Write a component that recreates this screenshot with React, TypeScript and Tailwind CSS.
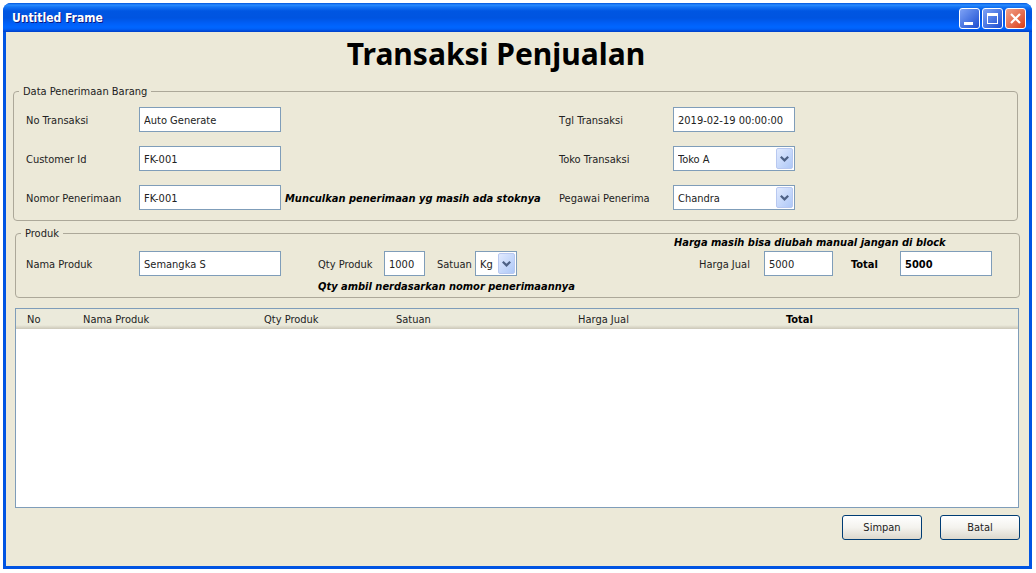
import type { ReactNode } from 'react';

const fieldBox =
  'h-[25px] w-full min-w-0 rounded-none border border-[#7f9db9] bg-white px-1 pt-0.5 text-[11px] leading-4 text-[#222] outline-none';

function Field({ id, value, bold = false }: { id: string; value: string; bold?: boolean }) {
  return (
    <input id={id} type="text" defaultValue={value} className={`${fieldBox} ${bold ? 'font-bold text-black' : ''}`} />
  );
}

function Dropdown({ id, value }: { id: string; value: string }) {
  return (
    <div className="relative">
      <select id={id} defaultValue={value} className={`${fieldBox} block appearance-none`}>
        <option>{value}</option>
      </select>
      <span className="pointer-events-none absolute top-0.5 right-0.5 flex h-[21px] w-[17px] items-center justify-center rounded-xs border border-[#b8c8f0] bg-linear-to-br from-[#e1eafe] to-[#aec8f7]">
        <svg width="9" height="6" viewBox="0 0 9 6" fill="none" aria-hidden="true">
          <path d="M0.8 0.8 4.5 4.4 8.2 0.8" stroke="#4d6185" strokeWidth="2.2" />
        </svg>
      </span>
    </div>
  );
}

function Group({ title, className, children }: { title: string; className: string; children: ReactNode }) {
  return (
    <fieldset className={`min-w-0 rounded border border-[#aca899] pl-[5px] ${className}`}>
      <legend className="h-[3px] px-1 leading-[3px]">{title}</legend>
      {children}
    </fieldset>
  );
}

const captionButton = 'flex size-[21px] items-center justify-center rounded-[3px] border border-white';

export default function App() {
  return (
    <div className="min-h-screen bg-white pt-[3px] pr-1 pb-1 pl-[3px] font-['DejaVu_Sans_Condensed','DejaVu_Sans',sans-serif] text-[11px] leading-4 text-[#222]">
      <main className="flex min-h-[calc(100vh-7px)] flex-col overflow-hidden rounded-t-lg bg-[#0054e3]">
        <header className="flex h-[29px] shrink-0 items-center justify-between bg-[linear-gradient(180deg,#0054dc_0px,#2a8cff_2px,#1474f4_4px,#0056e2_8px,#0054e0_15px,#005ef6_20px,#0066ff_24px,#0060f8_26px,#003fc8_29px)] pr-1.5 pl-[9px]">
          <h1 className="text-xs font-bold text-white [text-shadow:1px_1px_#0a1883]">Untitled Frame</h1>
          <div className="flex gap-0.5 pt-0.5">
            <button type="button" aria-label="Minimize" className={`${captionButton} bg-linear-to-br from-[#7fa2f5] to-[#1c4bd0]`}>
              <svg width="19" height="19" viewBox="0 0 19 19" aria-hidden="true">
                <path d="M4 13h9v3H4z" fill="#fff" />
              </svg>
            </button>
            <button type="button" aria-label="Maximize" className={`${captionButton} bg-linear-to-br from-[#7fa2f5] to-[#1c4bd0]`}>
              <svg width="19" height="19" viewBox="0 0 19 19" aria-hidden="true">
                <path d="M4 4h11v11H4zM5 7v7h9V7z" fill="#fff" fillRule="evenodd" />
              </svg>
            </button>
            <button type="button" aria-label="Close" className={`${captionButton} bg-linear-to-br from-[#f0a088] to-[#d8380c]`}>
              <svg width="19" height="19" viewBox="0 0 19 19" aria-hidden="true">
                <path d="M5 5l9 9M14 5l-9 9" stroke="#fff" strokeWidth="2.2" />
              </svg>
            </button>
          </div>
        </header>

        <div className="mx-[3px] mb-[3px] flex flex-1 flex-col bg-[#ece9d8] pr-2.5 pb-[26px] pl-[9px]">
          <h2 className="pt-1 pr-[42px] text-center font-['Noto_Sans',sans-serif] text-[30px] leading-9 font-bold text-black">
            Transaksi Penjualan
          </h2>

          <Group title="Data Penerimaan Barang" className="mt-[18px] mr-px -ml-0.5 pt-3.5 pb-2.5">
            <div className="grid grid-cols-[113px_142px_minmax(0,1fr)_114px_122px_222px] items-center gap-y-3.5 pl-[7px] [&_label]:pt-0.5">
              <label htmlFor="no">No Transaksi</label>
              <Field id="no" value="Auto Generate" />
              <span />
              <label htmlFor="tgl">Tgl Transaksi</label>
              <Field id="tgl" value="2019-02-19 00:00:00" />
              <span />

              <label htmlFor="customer">Customer Id</label>
              <Field id="customer" value="FK-001" />
              <span />
              <label htmlFor="toko">Toko Transaksi</label>
              <Dropdown id="toko" value="Toko A" />
              <span />

              <label htmlFor="nomor">Nomor Penerimaan</label>
              <Field id="nomor" value="FK-001" />
              <em className="pt-0.5 pl-1 font-bold whitespace-nowrap text-black">
                Munculkan penerimaan yg masih ada stoknya
              </em>
              <label htmlFor="pegawai">Pegawai Penerima</label>
              <Dropdown id="pegawai" value="Chandra" />
            </div>
          </Group>

          <Group title="Produk" className="mt-[11px] -mr-px pb-0.5">
            <div className="grid grid-cols-[113px_142px_37px_minmax(0,1fr)_318px] grid-rows-[16px_25px_19px] items-center pr-[27px] pl-[5px] [&_label]:pt-0.5">
              <em className="col-start-5 font-bold whitespace-nowrap text-black">
                Harga masih bisa diubah manual jangan di block
              </em>
              <label htmlFor="nama" className="col-start-1">
                Nama Produk
              </label>
              <Field id="nama" value="Semangka S" />
              <div className="col-start-4 grid grid-cols-[66px_53px_38px_42px] items-center">
                <label htmlFor="qty">Qty Produk</label>
                <div className="pr-3">
                  <Field id="qty" value="1000" />
                </div>
                <label htmlFor="satuan">Satuan</label>
                <Dropdown id="satuan" value="Kg" />
              </div>
              <div className="col-start-5 grid grid-cols-[65px_87px_49px_92px] items-center pl-[25px]">
                <label htmlFor="harga">Harga Jual</label>
                <div className="pr-[18px]">
                  <Field id="harga" value="5000" />
                </div>
                <label htmlFor="total" className="font-bold text-black">
                  Total
                </label>
                <Field id="total" value="5000" bold />
              </div>
              <em className="col-start-4 pt-0.5 font-bold whitespace-nowrap text-black">
                Qty ambil nerdasarkan nomor penerimaannya
              </em>
            </div>
          </Group>

          <div className="mt-2.5 flex-1 border border-[#7f9db9] bg-white">
            <table className="w-full table-fixed border-collapse">
              <thead>
                <tr className="h-5 bg-[linear-gradient(180deg,#ebeadb_0px,#ebeadb_16px,#cbc7b8_20px)] text-left *:pt-px *:pl-[11px] *:font-normal">
                  <th className="w-14">No</th>
                  <th className="w-[181px]">Nama Produk</th>
                  <th className="w-[132px]">Qty Produk</th>
                  <th className="w-[182px]">Satuan</th>
                  <th className="w-[208px]">Harga Jual</th>
                  <th className="text-black">
                    <b>Total</b>
                  </th>
                </tr>
              </thead>
              <tbody />
            </table>
          </div>

          <div className="mt-[7px] -mr-px flex justify-end gap-[18px]">
            {['Simpan', 'Batal'].map((name) => (
              <button
                key={name}
                type="button"
                className="h-[25px] w-20 rounded-[3px] border border-[#003c74] bg-linear-to-b from-white via-[#f4f3ee] to-[#dcd8cd]"
              >
                {name}
              </button>
            ))}
          </div>
        </div>
      </main>
    </div>
  );
}
